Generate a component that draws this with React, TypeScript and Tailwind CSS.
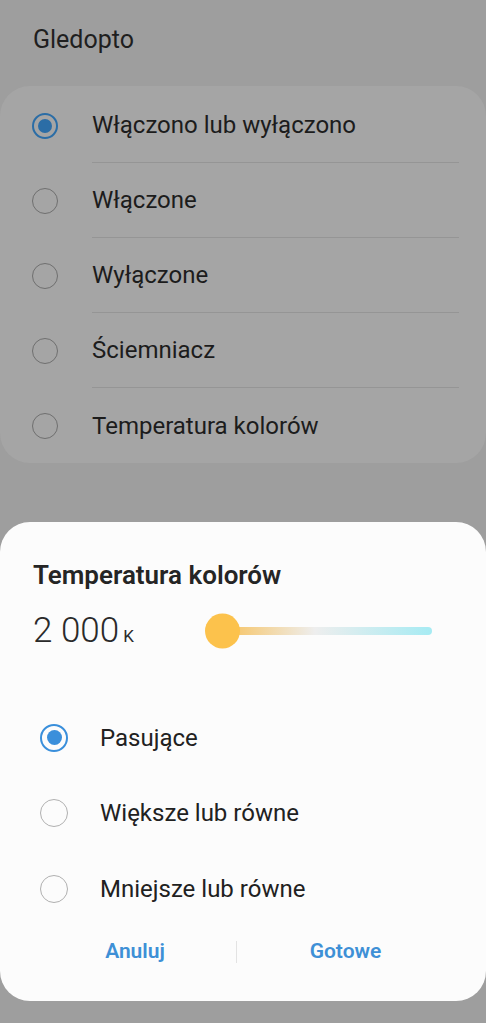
const topOptions = [
  "Włączono lub wyłączono",
  "Włączone",
  "Wyłączone",
  "Ściemniacz",
  "Temperatura kolorów",
];

const compareOptions = ["Pasujące", "Większe lub równe", "Mniejsze lub równe"];

function DimRadio({ checked }: { checked: boolean }) {
  return checked ? (
    <span className="flex h-[26px] w-[26px] shrink-0 items-center justify-center rounded-full border-2 border-[#2b6da6]">
      <span className="h-[14px] w-[14px] rounded-full bg-[#2b6da6]" />
    </span>
  ) : (
    <span className="h-[26px] w-[26px] shrink-0 rounded-full border-[1.5px] border-[#6f6f6f]" />
  );
}

function Radio({ checked }: { checked: boolean }) {
  return checked ? (
    <span className="flex h-[28px] w-[28px] shrink-0 items-center justify-center rounded-full border-2 border-[#3a8fdb]">
      <span className="h-[15px] w-[15px] rounded-full bg-[#3a8fdb]" />
    </span>
  ) : (
    <span className="h-[28px] w-[28px] shrink-0 rounded-full border-[1.5px] border-[#b0b0b0]" />
  );
}

function TempSlider() {
  return (
    <svg width="230" height="40" viewBox="0 0 230 40">
      <defs>
        <linearGradient id="temp" x1="0" x2="1" y1="0" y2="0">
          <stop offset="0" stopColor="#f8c057" />
          <stop offset="0.45" stopColor="#eeeeee" />
          <stop offset="1" stopColor="#a6ebf3" />
        </linearGradient>
      </defs>
      <rect x="14" y="16" width="213" height="8" rx="4" fill="url(#temp)" />
      <circle cx="17.5" cy="20" r="17.5" fill="#fcc24c" />
    </svg>
  );
}

export default function App() {
  return (
    <div
      className="flex min-h-[1023px] w-full flex-col bg-[#9e9e9e] text-[#1c1c1c]"
      style={{ fontFamily: "Roboto, 'Noto Sans', sans-serif" }}
    >
      <h1 className="px-[33px] pt-[25px] text-[25px] leading-[30px] text-[#1f1f1f]">
        Gledopto
      </h1>

      <div className="mt-[31px] rounded-[30px] bg-[#a5a5a5] pt-[2px]">
        {topOptions.map((label, i) => (
          <div key={label} className="flex h-[75px] items-center pl-[32px]">
            <DimRadio checked={i === 0} />
            <div
              className={`ml-[34px] mr-[27px] flex h-full flex-1 items-center text-[24px] ${
                i < topOptions.length - 1 ? "border-b border-[#959595]" : ""
              }`}
            >
              {label}
            </div>
          </div>
        ))}
      </div>

      <div className="mt-[59px] rounded-[30px] bg-[#fcfcfc] text-[#222]">
        <h2 className="px-[33px] pt-[38px] text-[26px] font-semibold leading-[30px] text-[#252525]">
          Temperatura kolorów
        </h2>

        <div className="mt-[21px] flex h-[40px] items-center pl-[33px]">
          <div className="flex w-[172px] items-baseline">
            <span className="text-[35px] font-light leading-[40px] text-[#2a2a2a]">
              2 000
            </span>
            <span className="ml-[4px] text-[17px] text-[#2a2a2a]">K</span>
          </div>
          <TempSlider />
        </div>

        <div className="mt-[49px]">
          {compareOptions.map((label, i) => (
            <div key={label} className="flex h-[75.5px] items-center pl-[40px]">
              <Radio checked={i === 0} />
              <span className="ml-[32px] text-[24px] text-[#212121]">{label}</span>
            </div>
          ))}
        </div>

        <div className="flex h-[50px] items-center pl-[34px] pr-[32px] text-[21px] font-semibold text-[#3e90d6]">
          <button className="w-[202px] text-center">Anuluj</button>
          <span className="h-[22px] w-px bg-[#e3e3e3]" />
          <button className="flex-1 text-center">Gotowe</button>
        </div>
        <div className="h-[24px]" />
      </div>
    </div>
  );
}
